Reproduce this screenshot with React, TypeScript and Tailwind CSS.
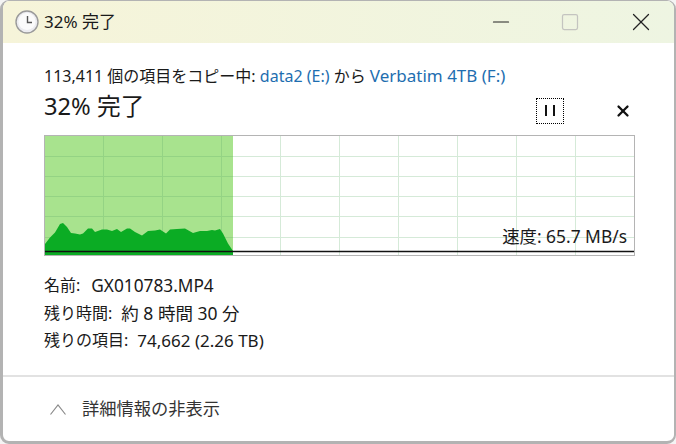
import { X, Minus, Square } from "lucide-react";

const fontStack = { fontFamily: '"Noto Sans", "Noto Sans CJK JP", sans-serif' };

const verticals = [103, 162, 221, 280, 339, 398, 457, 516, 575];
const horizontals = [156, 176, 196, 216, 237];

// traced from the copy speed curve
const curve =
  "M45 256 L45 244 L50 237.5 L55 232.5 L60 224 L63 223 L67 227 L71 233 L75 233.5 L80 234.5 L83 233.5 L88 228.5 L92 228.5 L95 232 L102 229.5 L107 229.5 L112 231 L117 229 L121 232 L127 228.5 L130 228.5 L135 232 L142 235.5 L148 231 L155 230.5 L160 229.5 L166 233.5 L170 229.5 L177 229 L185 228.5 L193 233 L200 231 L207 231 L212 230 L215 230.5 L220 229 L223 233.5 L228 243.5 L233 251 L233 256 Z";

function ClockIcon() {
  return (
    <svg width="24" height="24" viewBox="0 0 24 24" className="shrink-0">
      <circle cx="12" cy="12" r="11" fill="#ececf0" stroke="#9a9a9a" strokeWidth="1.4" />
      <circle cx="12" cy="11.5" r="8.5" fill="#fbfbfb" />
      <path d="M12.5 6 V12.5 H17" fill="none" stroke="#555" strokeWidth="1.4" />
    </svg>
  );
}

function Chart() {
  return (
    <div className="relative w-[591px] h-[121px] border border-[#b4b4b4] bg-white">
      <svg viewBox="45 136 589 119" width="589" height="119" className="block">
        {verticals.map((x) => (
          <line key={x} x1={x + 0.5} x2={x + 0.5} y1="136" y2="256" stroke="#d5ead8" />
        ))}
        {horizontals.map((y) => (
          <line key={y} x1="45" x2="634" y1={y + 0.5} y2={y + 0.5} stroke="#d5ead8" />
        ))}
        <rect x="45" y="136" width="188" height="120" fill="#a8e38e" />
        {verticals.slice(0, 3).map((x) => (
          <line key={x} x1={x + 0.5} x2={x + 0.5} y1="136" y2="256" stroke="#94d384" />
        ))}
        {horizontals.map((y) => (
          <line key={y} x1="45" x2="233" y1={y + 0.5} y2={y + 0.5} stroke="#94d384" />
        ))}
        <path d={curve} fill="#0bac24" />
        <line x1="45" x2="634" y1="251.5" y2="251.5" stroke="#111" strokeWidth="1.5" />
      </svg>
      <span className="absolute right-[7px] top-[88px] text-[17.4px] leading-[24px] text-[#1a1a1a] whitespace-nowrap">
        速度: 65.7 MB/s
      </span>
    </div>
  );
}

export default function App() {
  return (
    <div className="w-[676px] h-[444px] bg-[#f4f4f4]" style={fontStack}>
      <div className="flex flex-col h-full rounded-[9px] border-2 border-b-[3px] border-l-[3px] border-t-[1.5px] border-[#b3b3b3] bg-white overflow-hidden">
        {/* title bar */}
        <div className="flex items-center h-[42px] shrink-0 bg-gradient-to-r from-[#f6f4d9] to-[#eef5e2] pl-[12px]">
          <ClockIcon />
          <span className="ml-[5px] text-[17px] text-[#1a1a1a]">32% 完了</span>
          <div className="ml-auto flex items-center gap-[46px] mr-[18px]">
            <Minus className="w-[26px] h-[26px] text-[#222]" strokeWidth={1} />
            <Square className="w-[20px] h-[20px] text-[#c4c4c0]" strokeWidth={1.5} />
            <X className="w-[30px] h-[30px] text-[#222]" strokeWidth={1} />
          </div>
        </div>

        {/* progress area */}
        <div className="flex flex-col pl-[41px] pr-[39px] pt-[21px]">
          <div className="text-[16px] leading-[24px] text-[#1a1a1a] whitespace-nowrap">
            113,411 個の項目をコピー中: <span className="text-[#1e6eb0]">data2 (E:)</span> から{" "}
            <span className="text-[17px] text-[#1e6eb0]">Verbatim 4TB (F:)</span>
          </div>
          <div className="flex items-center h-[36px]">
            <span className="pt-[2px] text-[23.7px] text-[#1a1a1a]">32% 完了</span>
            <button className="ml-auto mt-[9px] flex items-center justify-center gap-[6px] w-[28px] h-[26px] border border-dotted border-black">
              <span className="w-[2px] h-[11px] bg-[#111]" />
              <span className="w-[2px] h-[11px] bg-[#111]" />
            </button>
            <X className="ml-[50px] mr-[3px] mt-[9px] w-[18px] h-[18px] text-[#111]" strokeWidth={3} />
          </div>
          <div className="mt-[11px]">
            <Chart />
          </div>
          <div className="mt-[16px] flex flex-col text-[16px] leading-[27.5px] text-[#1a1a1a]">
            <div className="flex">
              <span>名前:</span>
              <span className="ml-[11px] text-[17.25px]">GX010783.MP4</span>
            </div>
            <div className="flex">
              <span>残り時間:</span>
              <span className="ml-[9px] text-[17.5px]">約 8 時間 30 分</span>
            </div>
            <div className="flex">
              <span>残りの項目:</span>
              <span className="ml-[9px] text-[17px]">74,662 (2.26 TB)</span>
            </div>
          </div>
        </div>

        {/* footer */}
        <div className="mt-auto h-[66px] border-t-2 border-[#e2e2e2] flex items-center pl-[47px]">
          <svg width="16" height="11" viewBox="0 0 16 11" fill="none" className="shrink-0">
            <path d="M0.5 10.5 L8 1 L15.5 10.5" stroke="#8a8a8a" strokeWidth="1.2" />
          </svg>
          <span className="ml-[16px] text-[17.25px] text-[#333]">詳細情報の非表示</span>
        </div>
      </div>
    </div>
  );
}
